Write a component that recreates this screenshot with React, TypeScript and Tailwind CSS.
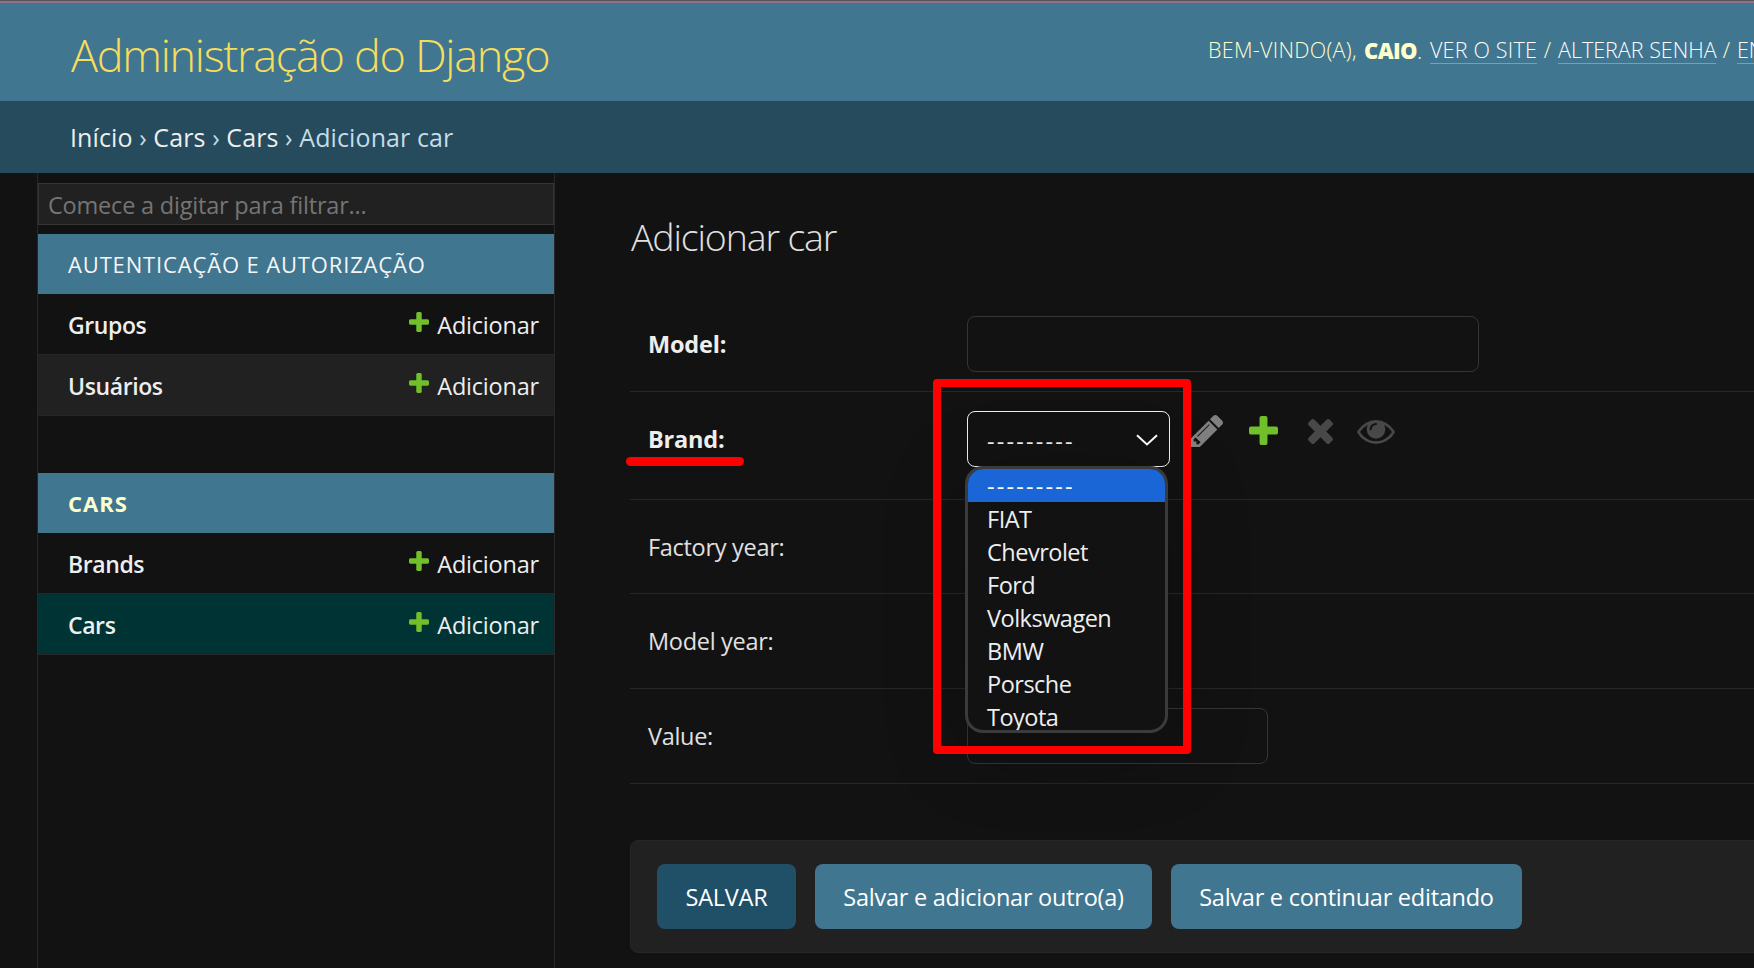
import type { ReactNode } from "react";

const PLUS =
  "M1600 796v192q0 40-28 68t-68 28h-416v416q0 40-28 68t-68 28h-192q-40 0-68-28t-28-68v-416h-416q-40 0-68-28t-28-68v-192q0-40 28-68t68-28h416v-416q0-40 28-68t68-28h192q40 0 68 28t28 68v416h416q40 0 68 28t28 68z";
const PENCIL =
  "M491 1536l91-91-235-235-91 91v107h128v128h107zm523-928q0-22-22-22-10 0-17 7l-542 542q-7 7-7 17 0 22 22 22 10 0 17-7l542-542q7-7 7-17zm-54-192l416 416-832 832h-416v-416zm683 96q0 53-37 90l-166 166-416-416 166-165q36-38 90-38 53 0 91 38l235 234q37 39 37 91z";
const CROSS =
  "M1490 1322q0 40-28 68l-136 136q-28 28-68 28t-68-28l-294-294-294 294q-28 28-68 28t-68-28l-136-136q-28-28-28-68t28-68l294-294-294-294q-28-28-28-68t28-68l136-136q28-28 68-28t68 28l294 294 294-294q28-28 68-28t68 28l136 136q28 28 28 68t-28 68l-294 294 294 294q28 28 28 68z";
const EYE =
  "M1664 960q-152-236-381-353 61 104 61 225 0 185-131.5 316.5t-316.5 131.5-316.5-131.5-131.5-316.5q0-121 61-225-229 117-381 353 133 205 333.5 326.5t434.5 121.5 434.5-121.5 333.5-326.5zm-720-384q0-20-14-34t-34-14q-125 0-214.5 89.5t-89.5 214.5q0 20 14 34t34 14 34-14 14-34q0-86 61-147t147-61q20 0 34-14t14-34zm848 384q0 34-20 69-140 230-376.5 368.5t-499.5 138.5-499.5-139-376.5-368q-20-35-20-69t20-69q140-229 376.5-368t499.5-139 499.5 139 376.5 368q20 35 20 69z";

const OPTIONS = ["---------", "FIAT", "Chevrolet", "Ford", "Volkswagen", "BMW", "Porsche", "Toyota"];

function Section({ title, current = false }: { title: string; current?: boolean }) {
  return (
    <div
      className={`flex h-[60px] shrink-0 items-center bg-[#417690] pl-[30px] text-[22px] ${
        current ? "font-bold tracking-[1px] text-[#ffffcc]" : "tracking-[0.85px] text-[#f5f5f5]"
      }`}
    >
      {title}
    </div>
  );
}

function ModelRow({ name, className = "" }: { name: string; className?: string }) {
  return (
    <div
      className={`flex h-[61px] shrink-0 items-center justify-between border-b border-[#272727] pt-0.5 pr-[15px] pl-[30px] text-[#eeeeee] ${className}`}
    >
      <span className="text-[23px] font-semibold tracking-[-0.4px]">{name}</span>
      <span className="flex items-center gap-2 text-[23.5px] tracking-[-0.2px]">
        <svg viewBox="192 188 1408 1408" className="mb-[7px] size-5 fill-[#70bf2b]">
          <path d={PLUS} />
        </svg>
        <span className="pt-0.5">Adicionar</span>
      </span>
    </div>
  );
}

function FormRow({ label, bold = false, className, children }: { label: string; bold?: boolean; className: string; children?: ReactNode }) {
  return (
    <div className={`flex items-start border-b border-[#272727] pt-[19px] pl-[18px] ${className}`}>
      <span
        className={`flex h-14 w-[319px] shrink-0 items-center ${
          bold ? "pt-0.5 text-[23.5px] font-bold tracking-[-0.2px] text-[#eeeeee]" : "pt-[2px] text-[23.5px] tracking-[-0.3px] text-[#e0e0e0]"
        }`}
      >
        {label}
      </span>
      {children}
    </div>
  );
}

export default function App() {
  return (
    <div className="flex h-[968px] w-[1754px] flex-col overflow-hidden bg-[#121212] font-['Open_Sans','Noto_Sans',sans-serif] leading-none whitespace-nowrap">
      <div className="h-px shrink-0 bg-[#5c5162]" />
      <div className="h-0.5 shrink-0 bg-[#8f7581]" />
      <header className="flex h-[98px] shrink-0 bg-[#417690]">
        <h1 className="w-[1208px] shrink-0 pt-[29px] pl-[71px] text-[45px] font-light tracking-[-1.3px] text-[#f5dd5d]">
          Administração do Django
        </h1>
        <div className="mt-[35px] flex h-6 shrink-0 items-center text-[21.5px] font-light text-[#ffffcc]">
          <span className="w-[156px] tracking-[0.3px]">BEM-VINDO(A),</span>
          <span className="w-[66px]">
            <b className="text-[22px] font-extrabold tracking-[-0.6px]">CAIO</b>.
          </span>
          <span className="w-[107px] border-b border-[#7a9fb1] pt-[3px] pb-[2px] tracking-[0.2px] text-white">VER O SITE</span>
          <span className="w-[21px] text-center">/</span>
          <span className="w-[158px] border-b border-[#7a9fb1] pt-[3px] pb-[2px] text-white">ALTERAR SENHA</span>
          <span className="w-[21px] text-center">/</span>
          <span className="border-b border-[#7a9fb1] pt-[3px] pb-[2px] text-white">ENCERRAR SESSÃO</span>
        </div>
      </header>

      <nav className="flex h-[72px] shrink-0 items-center bg-[#264b5d] pt-px pl-[70px] text-[25px] tracking-[0.1px] whitespace-pre text-[#c4dce8]">
        <span className="text-[#eeeeee]">Início</span> › <span className="text-[#eeeeee]">Cars</span> ›{" "}
        <span className="text-[#eeeeee]">Cars</span> › Adicionar car
      </nav>

      <div className="flex min-h-0 flex-1">
        <aside className="ml-[37px] flex w-[518px] shrink-0 flex-col border-x border-[#272727] pt-[10px]">
          <div className="mb-[9px] flex h-[42px] shrink-0 items-center border border-[#353535] bg-[#212121] pt-1 pl-[9px] text-[23.5px] tracking-[-0.2px] text-[#757575]">
            Comece a digitar para filtrar...
          </div>
          <Section title="AUTENTICAÇÃO E AUTORIZAÇÃO" />
          <ModelRow name="Grupos" />
          <ModelRow name="Usuários" className="bg-[#212121]" />
          <div className="h-[57px] shrink-0" />
          <Section title="CARS" current />
          <ModelRow name="Brands" />
          <ModelRow name="Cars" className="bg-[#003333]" />
        </aside>

        <main className="ml-[75px] flex flex-1 flex-col">
          <h2 className="flex h-[124px] items-center pt-[4px] pl-px text-[37.5px] font-light tracking-[-1.15px] text-[#e0e0e0]">
            Adicionar car
          </h2>

          <FormRow label="Model:" bold className="h-[95px]">
            <div className="h-14 w-[512px] rounded-[8px] border border-[#353535]" />
          </FormRow>

          <FormRow label="Brand:" bold className="relative z-10 h-[108px]">
            <div className="flex h-14 w-[203px] shrink-0 items-center justify-between rounded-[8px] border border-[#eeeeee] pr-[11px] pl-[19px] text-[#eeeeee]">
              <span className="pt-[5px] text-[23.5px] tracking-[2.2px]">---------</span>
              <svg viewBox="0 0 22 12" className="mt-px h-3 w-[22px] fill-none stroke-white stroke-2">
                <path d="M1 1.2L11 10.5L21 1.2" />
              </svg>
            </div>
            <div className="ml-[21px] flex h-[38px] items-center">
              <svg viewBox="128 149 1515 1515" className="mt-px size-8 fill-[#808080]">
                <path d={PENCIL} />
              </svg>
              <svg viewBox="192 188 1408 1408" className="ml-[26px] size-[29px] fill-[#70bf2b]">
                <path d={PLUS} />
              </svg>
              <svg viewBox="302 366 1188 1188" className="mt-[3px] ml-[29.5px] size-[25px] fill-[#484848]">
                <path d={CROSS} />
              </svg>
              <svg viewBox="0 384 1792 1152" className="mt-[3px] ml-[24.5px] h-6 w-[38px] fill-[#484848]">
                <path d={EYE} />
              </svg>
            </div>

            <div className="absolute top-[65px] left-[-4px] h-[9px] w-[118px] rounded-full bg-[#ff0000]" />

            <div className="absolute top-[74px] left-[335px] h-[267px] w-[203px] overflow-hidden rounded-[18px] border-[3px] border-[#3b3b3b] bg-[#121212] text-[23.5px] tracking-[-0.5px] text-[#eeeeee] shadow-[0_16px_80px_rgba(0,0,0,0.25)]">
              {OPTIONS.map((option, i) => (
                <div
                  key={option}
                  className={`flex h-[33px] items-center pt-[3px] pl-[19px] ${i === 0 ? "bg-[#1a66d6] tracking-[2.2px] text-white" : ""}`}
                >
                  {option}
                </div>
              ))}
            </div>

            <div className="absolute top-[-13px] left-[303px] h-[375px] w-[258px] rounded-[4px] border-8 border-[#ff0000]" />
          </FormRow>

          <FormRow label="Factory year:" className="h-[94px]" />
          <FormRow label="Model year:" className="h-[95px]" />
          <FormRow label="Value:" className="h-[95px]">
            <div className="h-14 w-[301px] rounded-[8px] border border-[#353535]" />
          </FormRow>

          <div className="mt-14 -mr-10 flex h-[113px] shrink-0 items-center gap-[19px] rounded-[8px] border border-[#272727] bg-[#212121] pl-[26px] text-[23.5px] tracking-[-0.25px] text-white">
            <div className="flex h-[65px] w-[139px] items-center justify-center rounded-[8px] bg-[#205067] pt-0.5">SALVAR</div>
            <div className="flex h-[65px] w-[337px] items-center justify-center rounded-[8px] bg-[#417690] pt-0.5">
              Salvar e adicionar outro(a)
            </div>
            <div className="flex h-[65px] w-[351px] items-center justify-center rounded-[8px] bg-[#417690] pt-0.5">
              Salvar e continuar editando
            </div>
          </div>
        </main>
      </div>
    </div>
  );
}
